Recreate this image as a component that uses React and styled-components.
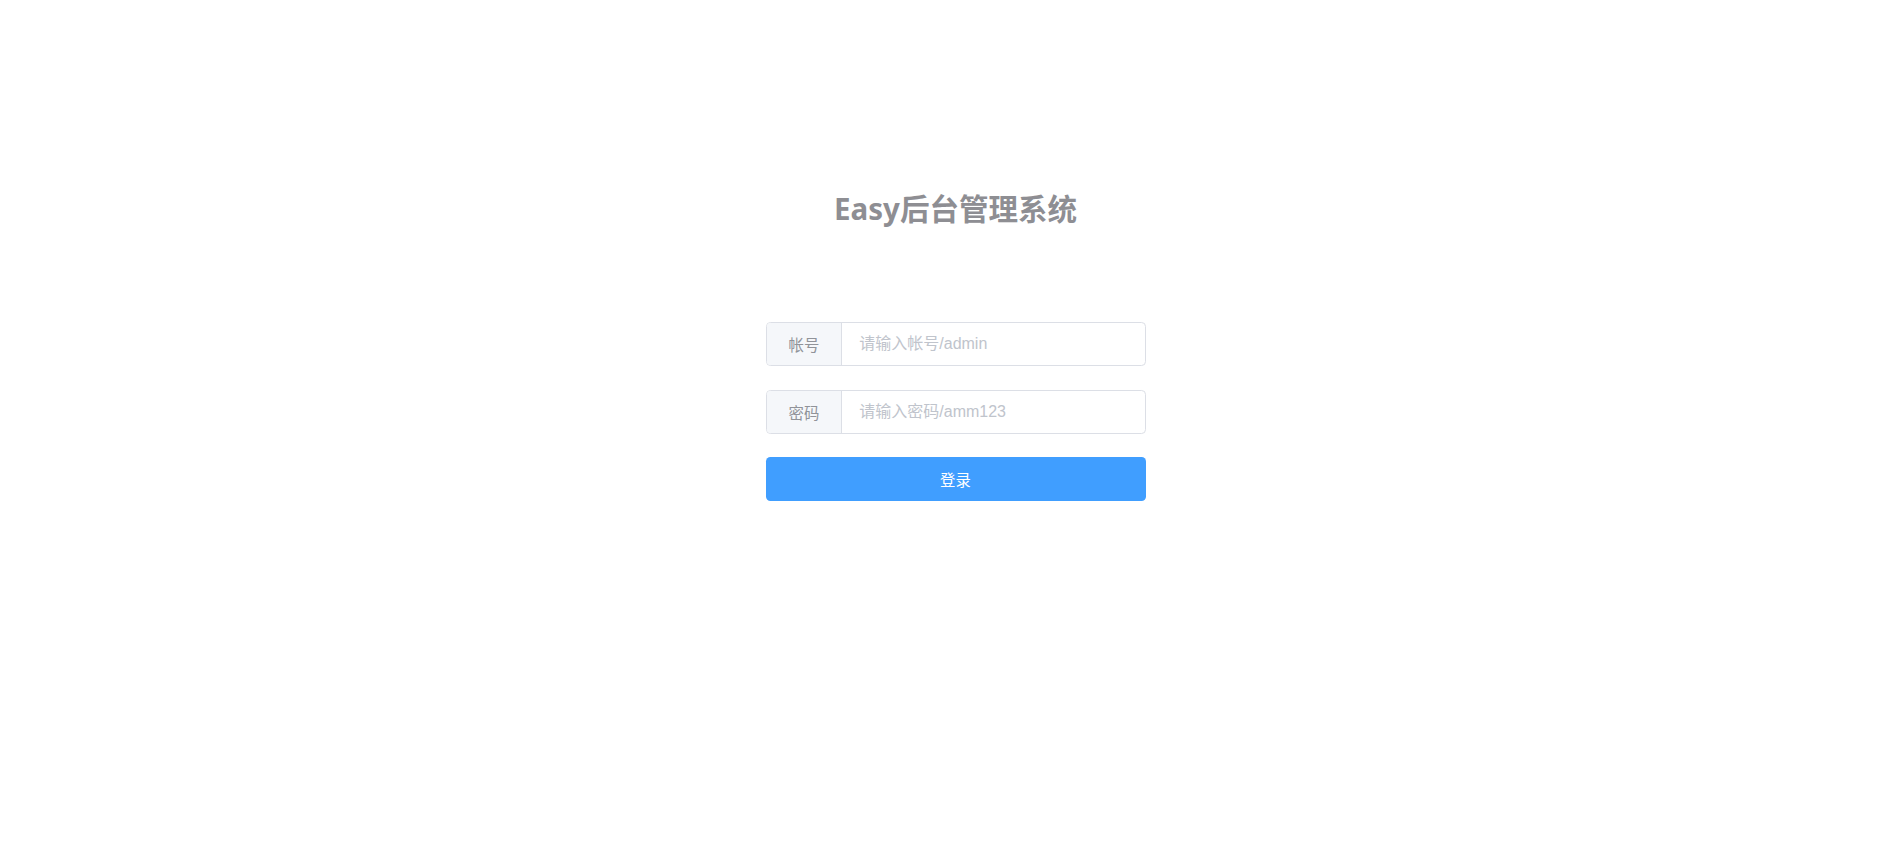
import React from 'react';
import styled, { createGlobalStyle } from 'styled-components';

const GlobalStyle = createGlobalStyle`
  html, body {
    margin: 0;
    padding: 0;
    background: #fff;
    font-family: "Liberation Sans", Arial, "Noto Sans CJK SC", sans-serif;
  }
  * { box-sizing: border-box; }
`;

const Page = styled.div`
  width: 100%;
  min-height: 864px;
  display: flex;
  flex-direction: column;
  align-items: center;
  padding: 189px 0 0 17px;
`;

const Title = styled.h1`
  margin: 0;
  height: 40px;
  line-height: 40px;
  font-size: 29.5px;
  font-weight: 700;
  color: #8e8e93;
  font-family: "Noto Sans", "Noto Sans CJK SC", sans-serif;
  text-align: center;
`;

const Form = styled.form`
  width: 380px;
  margin-top: 93px;
  display: flex;
  flex-direction: column;
  gap: 24px;
`;

const InputGroup = styled.div`
  display: flex;
  height: 44px;
  border: 1px solid #dcdfe6;
  border-radius: 4.4px;
  overflow: hidden;
  background: #fff;
`;

const Prepend = styled.div`
  flex: none;
  display: flex;
  align-items: center;
  padding: 0 22px;
  background: #f5f7fa;
  border-right: 1px solid #dcdfe6;
  color: #909399;
  font-size: 15.4px;
  font-family: "Noto Sans CJK SC", sans-serif;
`;

const Input = styled.input`
  flex: 1;
  min-width: 0;
  border: none;
  outline: none;
  padding: 0 17px;
  font-size: 16px;
  color: #606266;
  font-family: "Liberation Sans", Arial, "Noto Sans CJK SC", sans-serif;
  background: transparent;

  &::placeholder {
    color: #c0c4cc;
  }
`;

const Button = styled.button`
  height: 44px;
  margin-top: -1px;
  border: none;
  border-radius: 4.4px;
  background: #409eff;
  color: #fff;
  font-size: 15.4px;
  font-family: "Noto Sans CJK SC", sans-serif;
  cursor: pointer;
`;

const fields = [
  { label: '帐号', placeholder: '请输入帐号/admin', type: 'text' },
  { label: '密码', placeholder: '请输入密码/amm123', type: 'password' },
];

export default function App() {
  return (
    <>
      <GlobalStyle />
      <Page>
        <Title>Easy后台管理系统</Title>
        <Form onSubmit={e => e.preventDefault()}>
          {fields.map(f => (
            <InputGroup key={f.label}>
              <Prepend>{f.label}</Prepend>
              <Input type={f.type} placeholder={f.placeholder} />
            </InputGroup>
          ))}
          <Button type="submit">登录</Button>
        </Form>
      </Page>
    </>
  );
}
